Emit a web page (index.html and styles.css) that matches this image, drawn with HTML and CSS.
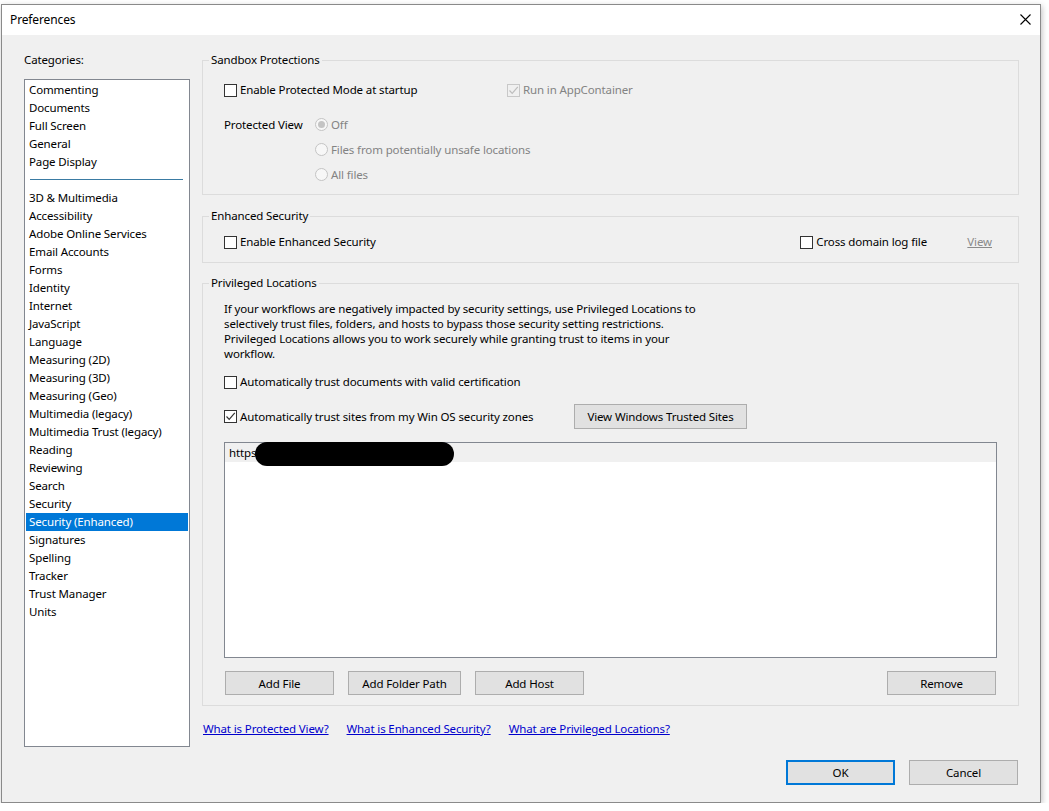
FILE: index.html
```html
<!DOCTYPE html>
<html lang="en">
<head>
  <meta charset="UTF-8" />
  <title>Preferences</title>
  <link rel="stylesheet" href="styles.css">
</head>
<body>

  <div class="window">

    <!-- Title bar -->
    <div class="titlebar">
      <span class="title">Preferences</span>
      <span class="close">
        <svg width="11" height="11" viewBox="0 0 11 11"><path d="M0.5 0.5 L10.5 10.5 M10.5 0.5 L0.5 10.5" stroke="#000" stroke-width="1.1" fill="none"/></svg>
      </span>
    </div>

    <div class="content">
      <div class="main">

        <!-- Categories -->
        <div class="categories">
          <div class="cat-label">Categories:</div>
          <ul class="cat-list">
            <li>Commenting</li>
            <li>Documents</li>
            <li>Full Screen</li>
            <li>General</li>
            <li>Page Display</li>
            <li class="sep"></li>
            <li>3D &amp; Multimedia</li>
            <li>Accessibility</li>
            <li>Adobe Online Services</li>
            <li>Email Accounts</li>
            <li>Forms</li>
            <li>Identity</li>
            <li>Internet</li>
            <li>JavaScript</li>
            <li>Language</li>
            <li>Measuring (2D)</li>
            <li>Measuring (3D)</li>
            <li>Measuring (Geo)</li>
            <li>Multimedia (legacy)</li>
            <li>Multimedia Trust (legacy)</li>
            <li>Reading</li>
            <li>Reviewing</li>
            <li>Search</li>
            <li>Security</li>
            <li class="selected">Security (Enhanced)</li>
            <li>Signatures</li>
            <li>Spelling</li>
            <li>Tracker</li>
            <li>Trust Manager</li>
            <li>Units</li>
          </ul>
        </div>

        <!-- Right panel -->
        <div class="panel">

          <fieldset class="group sandbox">
            <legend>Sandbox Protections</legend>
            <div class="group-body">
              <div class="row-top">
                <label class="check"><span class="box"></span>Enable Protected Mode at startup</label>
                <label class="check disabled"><span class="box checked"><svg width="11" height="11" viewBox="0 0 11 11"><path d="M1.5 5.5 L4.2 8.3 L9.8 1.8" stroke="#bdbdbd" stroke-width="1.2" fill="none"/></svg></span>Run in AppContainer</label>
              </div>
              <div class="pview">
                <div class="pview-label">Protected View</div>
                <div class="radios">
                  <label class="radio disabled"><span class="dot on"></span>Off</label>
                  <label class="radio disabled"><span class="dot"></span>Files from potentially unsafe locations</label>
                  <label class="radio disabled"><span class="dot"></span>All files</label>
                </div>
              </div>
            </div>
          </fieldset>

          <fieldset class="group enhanced">
            <legend>Enhanced Security</legend>
            <div class="group-body">
              <div class="row-split">
                <label class="check"><span class="box"></span>Enable Enhanced Security</label>
                <div class="right-opts">
                  <label class="check cross"><span class="box"></span>Cross domain log file</label>
                  <a class="view-link" href="#">View</a>
                </div>
              </div>
            </div>
          </fieldset>

          <fieldset class="group privileged">
            <legend>Privileged Locations</legend>
            <div class="group-body">
              <p class="intro">If your workflows are negatively impacted by security settings, use Privileged Locations to<br>selectively trust files, folders, and hosts to bypass those security setting restrictions.<br>Privileged Locations allows you to work securely while granting trust to items in your<br>workflow.</p>
              <label class="check cert"><span class="box"></span>Automatically trust documents with valid certification</label>
              <div class="row-sites">
                <label class="check"><span class="box checked"><svg width="11" height="11" viewBox="0 0 11 11"><path d="M1.5 5.5 L4.2 8.3 L9.8 1.8" stroke="#333" stroke-width="1.2" fill="none"/></svg></span>Automatically trust sites from my Win OS security zones</label>
                <button class="btn btn-sites">View Windows Trusted Sites</button>
              </div>
              <div class="loc-list">
                <div class="loc-row">https<span class="redact"></span></div>
              </div>
              <div class="loc-buttons">
                <button class="btn">Add File</button>
                <button class="btn wide">Add Folder Path</button>
                <button class="btn">Add Host</button>
                <button class="btn remove">Remove</button>
              </div>
            </div>
          </fieldset>

          <div class="help-links">
            <a href="#">What is Protected View?</a>
            <a href="#">What is Enhanced Security?</a>
            <a href="#">What are Privileged Locations?</a>
          </div>
        </div>
      </div>

      <!-- OK / Cancel -->
      <div class="dialog-buttons">
        <button class="btn default">OK</button>
        <button class="btn">Cancel</button>
      </div>
    </div>
  </div>

</body>
</html>
```

FILE: styles.css
```css
/* Genel */
body {
  margin: 0;
  padding: 4px 0 0 1px;
  background: #fff;
  font-family: "Noto Sans", "Open Sans", sans-serif;
  font-size: 11.5px;
  letter-spacing: -0.13px;
  color: #000;
}

.window {
  box-sizing: border-box;
  width: 1040px;
  height: 799px;
  border: 1px solid #8a8a8a;
  background: #f0f0f0;
  box-shadow: 1px 2px 6px rgba(0,0,0,0.25);
}

/* Title bar */
.titlebar {
  height: 30px;
  background: #fff;
  display: flex;
  justify-content: space-between;
  align-items: center;
  padding-left: 8px;
}
.titlebar .title {
  font-size: 12px;
  line-height: 16px;
  margin-top: -1px;
}
.titlebar .close {
  width: 30px;
  height: 30px;
  display: flex;
  align-items: center;
  justify-content: center;
  margin-top: -2px;
}

.content {
  padding: 17px 21px 0 22px;
}
.main {
  display: flex;
  gap: 12px;
  height: 695px;
}

/* Categories */
.categories {
  width: 166px;
}
.cat-label {
  line-height: 16px;
  margin-bottom: 11px;
}
.cat-list {
  list-style: none;
  margin: 0;
  padding: 1px;
  box-sizing: border-box;
  height: 668px;
  background: #fff;
  border: 1px solid #828790;
}
.cat-list li {
  height: 18px;
  line-height: 18px;
  padding-left: 3px;
  white-space: nowrap;
}
.cat-list li.sep {
  box-sizing: border-box;
  padding: 8px 5px 0 4px;
}
.cat-list li.sep::after {
  content: "";
  display: block;
  height: 1px;
  background: #3a7ba3;
}
.cat-list li.selected {
  background: #0078d7;
  color: #fff;
}

/* Panel */
.panel {
  width: 817px;
}
.group {
  margin: 0;
  padding: 0;
  border: 1px solid #dcdcdc;
  min-width: 0;
}
.group legend {
  padding: 0 2px;
  margin-left: 6px;
  line-height: 16px;
}
.group-body {
  padding: 0 21px;
}

.sandbox .group-body {
  padding-top: 14px;
  padding-bottom: 7px;
}
.enhanced {
  margin-top: 13px;
}
.enhanced .group-body {
  padding-top: 10px;
  padding-bottom: 12px;
}
.privileged {
  margin-top: 12px;
}
.privileged .group-body {
  padding-top: 10px;
  padding-bottom: 10px;
}

/* Checkbox / radio */
.check, .radio {
  display: flex;
  align-items: center;
  height: 16px;
  line-height: 16px;
  white-space: nowrap;
}
.box {
  width: 13px;
  height: 13px;
  box-sizing: border-box;
  border: 1px solid #333;
  background: #fff;
  margin-right: 3px;
  display: flex;
  align-items: center;
  justify-content: center;
  flex-shrink: 0;
}
.disabled {
  color: #838383;
}
.disabled .box {
  border-color: #c8c8c8;
  background: transparent;
}
.dot {
  width: 13px;
  height: 13px;
  box-sizing: border-box;
  border: 1px solid #c4c4c4;
  border-radius: 50%;
  background: #f7f7f7;
  margin-right: 3px;
  display: flex;
  align-items: center;
  justify-content: center;
}
.dot.on::after {
  content: "";
  width: 7px;
  height: 7px;
  border-radius: 50%;
  background: #c4c4c4;
}

.row-top {
  display: grid;
  grid-template-columns: 283px auto;
}
.pview {
  display: flex;
  margin-top: 14px;
}
.pview-label {
  width: 91px;
  line-height: 25px;
}
.radios .radio {
  height: 25px;
}

.row-split {
  display: flex;
  justify-content: space-between;
}
.right-opts {
  display: flex;
  align-items: center;
  margin-right: 5px;
}
.cross {
  width: 167px;
}
.view-link {
  color: #8a8a8a;
  line-height: 16px;
}

/* Privileged */
.intro {
  margin: 0;
  line-height: 15px;
}
.cert {
  margin-top: 13px;
}
.row-sites {
  display: flex;
  align-items: center;
  margin-top: 14px;
  height: 25px;
}
.row-sites .check {
  width: 350px;
}

.btn {
  font-family: inherit;
  font-size: 11.5px;
  letter-spacing: -0.13px;
  color: #000;
  background: #e1e1e1;
  border: 1px solid #adadad;
  height: 24px;
  width: 109px;
  padding: 0;
  box-sizing: border-box;
}
.btn-sites {
  width: 173px;
  height: 25px;
}

.loc-list {
  margin-top: 13px;
  height: 216px;
  box-sizing: border-box;
  background: #fff;
  border: 1px solid #828790;
}
.loc-row {
  height: 19px;
  line-height: 19px;
  background: #f0f0f0;
  padding-left: 4px;
  display: flex;
  align-items: center;
}
.redact {
  display: inline-block;
  width: 199px;
  height: 24px;
  border-radius: 12px;
  background: #000;
  margin-left: -1px;
  margin-top: 2px;
}

.loc-buttons {
  display: flex;
  gap: 14px;
  margin-top: 13px;
  padding: 0 1px;
}
.loc-buttons .wide {
  width: 113px;
}
.loc-buttons .remove {
  margin-left: auto;
}

/* Help links */
.help-links {
  display: flex;
  gap: 18px;
  margin-top: 15px;
  padding-left: 1px;
  line-height: 16px;
}
.help-links a {
  color: #0000cc;
}

/* Dialog buttons */
.dialog-buttons {
  display: flex;
  justify-content: flex-end;
  gap: 14px;
  margin-top: 13px;
  margin-right: 1px;
}
.dialog-buttons .btn {
  height: 25px;
}
.btn.default {
  border: 2px solid #0078d7;
}
```
